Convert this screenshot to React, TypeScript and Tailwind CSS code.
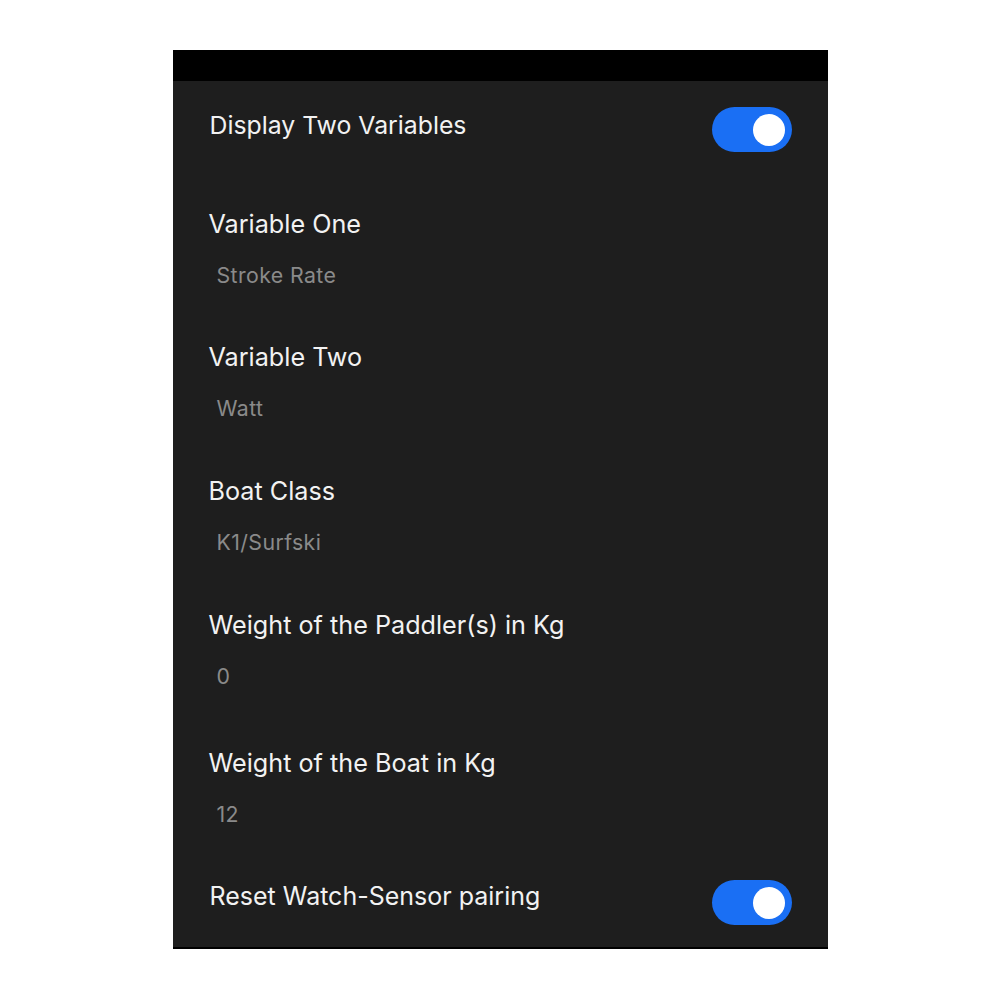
import React from 'react';

type Field = {
  label: string;
  value: string;
  gap: string;
};

const fields: Field[] = [
  { label: 'Variable One', value: 'Stroke Rate', gap: 'mt-[57px]' },
  { label: 'Variable Two', value: 'Watt', gap: 'mt-[52px]' },
  { label: 'Boat Class', value: 'K1/Surfski', gap: 'mt-[53px]' },
  { label: 'Weight of the Paddler(s) in Kg', value: '0', gap: 'mt-[53px]' },
  { label: 'Weight of the Boat in Kg', value: '12', gap: 'mt-[57px]' },
];

function Toggle() {
  return (
    <div className="flex h-[45px] w-[80px] shrink-0 items-center justify-end rounded-full bg-[#1a6ff4] pr-[7px]">
      <div className="h-[32px] w-[32px] rounded-full bg-white" />
    </div>
  );
}

export default function App() {
  return (
    <div
      className="flex min-h-[1000px] justify-center bg-white pt-[50px]"
      style={{ fontFamily: 'Inter, "Noto Sans", sans-serif' }}
    >
      <div className="flex h-[899px] w-[655px] flex-col bg-black">
        <div className="h-[31px]" />
        <div className="flex flex-col bg-[#1e1e1e] px-[36px] pb-[22px] pt-[26px]">
          <div className="flex items-start justify-between">
            <div className="ml-[1px] mt-[3px] text-[24.8px] leading-[30px] text-[#f2f2f2]">Display Two Variables</div>
            <Toggle />
          </div>

          {fields.map((field) => (
            <div key={field.label} className={field.gap}>
              <div className="text-[25.2px] leading-[30px] text-[#f2f2f2]">{field.label}</div>
              <div className="ml-[8px] mt-[21px] text-[21.3px] leading-[30px] tracking-[0.4px] text-[#8a8a8a]">
                {field.value}
              </div>
            </div>
          ))}

          <div className="mt-[51px] flex items-start justify-between">
            <div className="ml-[1px] mt-[1px] text-[25px] leading-[30px] text-[#f2f2f2]">Reset Watch-Sensor pairing</div>
            <Toggle />
          </div>
        </div>
      </div>
    </div>
  );
}
